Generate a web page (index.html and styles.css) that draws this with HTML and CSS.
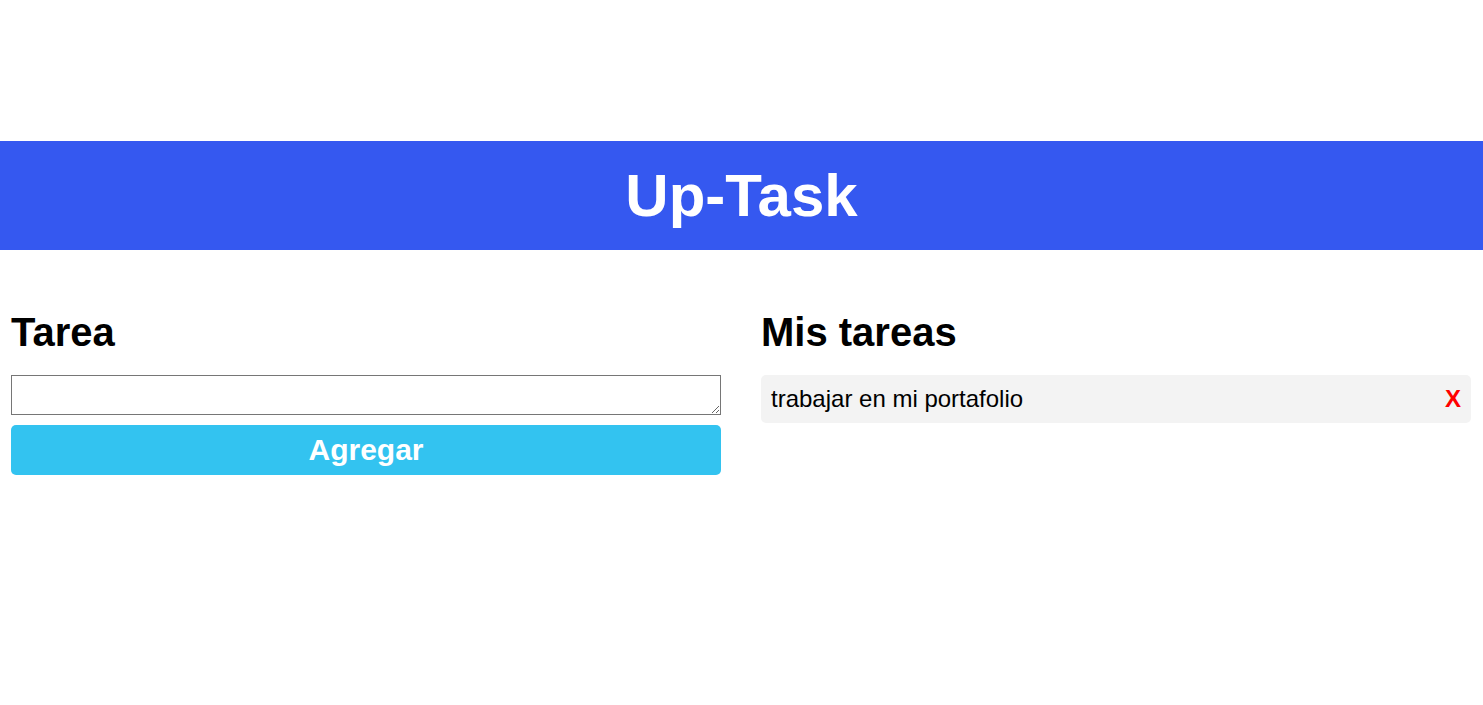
FILE: index.html
```html
<!DOCTYPE html>
<html lang="es">
<head>
<meta charset="UTF-8">
<title>Up-Task</title>
<link rel="stylesheet" href="styles.css">
</head>
<body>
<header class="header">
  <h1 class="header__title">Up-Task</h1>
</header>
<main class="layout">
  <section class="column">
    <h2 class="column__title">Tarea</h2>
    <form class="form">
      <textarea class="form__input"></textarea>
      <button type="button" class="form__button">Agregar</button>
    </form>
  </section>
  <section class="column">
    <h2 class="column__title">Mis tareas</h2>
    <ul class="tasks">
      <li class="task">
        <span class="task__text">trabajar en mi portafolio</span>
        <span class="task__delete">X</span>
      </li>
    </ul>
  </section>
</main>
</body>
</html>
```

FILE: styles.css
```css
* { box-sizing: border-box; }

body {
  margin: 0;
  padding-top: 141px;
  font-family: "Liberation Sans", Arial, sans-serif;
  background: #ffffff;
  color: #000;
}

.header {
  background: #3558f0;
  padding: 20px 0;
  text-align: center;
}

.header__title {
  margin: 0;
  font-size: 60px;
  font-weight: 700;
  color: #ffffff;
}

.layout {
  width: 1460px;
  margin: 60px 0 0 11px;
  display: grid;
  grid-template-columns: 1fr 1fr;
  column-gap: 40px;
}

.column__title {
  margin: 0 0 20px;
  font-size: 40px;
  font-weight: 700;
}

.form {
  display: flex;
  flex-direction: column;
  gap: 10px;
}

.form__input {
  display: block;
  width: 100%;
  height: 40px;
  border: 1px solid #767676;
  font-family: inherit;
  font-size: 16px;
  resize: both;
}

.form__button {
  height: 50px;
  border: none;
  border-radius: 5px;
  background: #33c3f0;
  color: #ffffff;
  font-family: inherit;
  font-size: 30px;
  font-weight: 700;
  cursor: pointer;
}

.tasks {
  list-style: none;
  margin: 0;
  padding: 0;
}

.task {
  display: flex;
  justify-content: space-between;
  align-items: center;
  height: 48px;
  padding: 0 10px;
  background: #f3f3f3;
  border-radius: 5px;
  font-size: 24px;
}

.task__delete {
  color: #ff0000;
  font-weight: 700;
  cursor: pointer;
}
```
